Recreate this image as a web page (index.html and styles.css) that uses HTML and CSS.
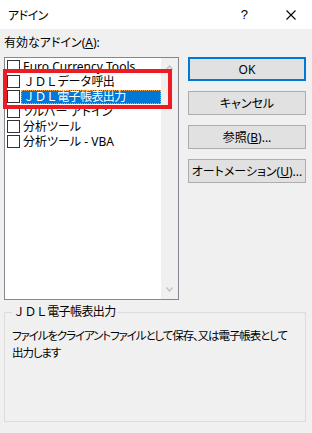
FILE: index.html
```
<!DOCTYPE html>
<html lang="ja">
<head>
    <meta charset="UTF-8">
    <title>アドイン</title>
    <link rel="stylesheet" href="styles.css">
</head>
<body>
    <div class="dialog">
        <div class="titlebar">
            <span class="title">アドイン</span>
            <span class="help">?</span>
            <svg class="close" width="10" height="10" viewBox="0 0 10 10">
                <path d="M0.5 0.5 L9.5 9.5 M9.5 0.5 L0.5 9.5" stroke="#000" stroke-width="1.1" fill="none"/>
            </svg>
        </div>
        <div class="content">
            <div class="label">有効なアドイン(<u>A</u>):</div>
            <div class="main">
                <div class="listbox">
                    <div class="items">
                        <div class="item"><span class="check"></span><span class="name">Euro Currency Tools</span></div>
                        <div class="item"><span class="check"></span><span class="name wide">ＪＤＬデータ呼出</span></div>
                        <div class="item"><span class="check"></span><span class="name wide selected">ＪＤＬ電子帳表出力</span></div>
                        <div class="item"><span class="check"></span><span class="name">ソルバー アドイン</span></div>
                        <div class="item"><span class="check"></span><span class="name">分析ツール</span></div>
                        <div class="item"><span class="check"></span><span class="name">分析ツール - VBA</span></div>
                    </div>
                    <div class="scrollbar">
                        <svg width="7" height="5" viewBox="0 0 7 5"><path d="M0.5 4.5 L3.5 1 L6.5 4.5" stroke="#c2c2c2" stroke-width="1.4" fill="none"/></svg>
                        <svg width="7" height="5" viewBox="0 0 7 5"><path d="M0.5 0.5 L3.5 4 L6.5 0.5" stroke="#c2c2c2" stroke-width="1.4" fill="none"/></svg>
                    </div>
                    <div class="marker"></div>
                </div>
                <div class="buttons">
                    <button class="btn default">OK</button>
                    <button class="btn">キャンセル</button>
                    <button class="btn">参照(<u>B</u>)...</button>
                    <button class="btn">オートメーション(<u>U</u>)...</button>
                </div>
            </div>
            <fieldset class="group">
                <legend>ＪＤＬ電子帳表出力</legend>
                <p class="desc">ファイルをクライアントファイルとして保存、又は電子帳表として<br>出力します</p>
            </fieldset>
        </div>
    </div>
</body>
</html>
```
FILE: styles.css
```
body{
    margin: 0;
    background-color: #f0f0f0;
    font-family: "Noto Sans", "Noto Sans CJK JP", sans-serif;
    font-size: 12px;
    color: #000;
}
.dialog{
    width: 312px;
    height: 433px;
    overflow: hidden;
}
.titlebar{
    height: 29px;
    background-color: #fff;
    display: flex;
    align-items: center;
}
.title{
    margin-left: 8px;
    font-feature-settings: "palt";
    letter-spacing: -0.5px;
}
.help{
    margin-left: auto;
    font-family: "Liberation Sans", sans-serif;
    font-size: 13px;
}
.close{
    margin-left: 38px;
    margin-right: 16px;
}
.content{
    padding: 0 6px 0 4px;
}
.label{
    padding-top: 6px;
    height: 16px;
    line-height: 16px;
    margin-bottom: 6px;
    font-feature-settings: "palt";
}
.main{
    display: flex;
}
.listbox{
    position: relative;
    box-sizing: border-box;
    width: 176px;
    height: 243px;
    border: 1px solid #828790;
    background-color: #fff;
    display: flex;
}
.items{
    flex: 1;
    padding: 1px 0 0 2px;
}
.item{
    height: 15px;
    display: flex;
    align-items: center;
}
.check{
    box-sizing: border-box;
    width: 13px;
    height: 13px;
    border: 1px solid #333;
    background-color: #fff;
    margin-right: 1px;
}
.name{
    padding: 0 2px;
    line-height: 14px;
    white-space: nowrap;
    font-feature-settings: "palt";
}
.wide{
    font-feature-settings: normal;
    letter-spacing: -0.6px;
}
.selected{
    background-color: #0078d7;
    color: #fff;
    outline: 1px dotted #f7a24a;
    outline-offset: -1px;
    width: 136px;
}
.scrollbar{
    width: 17px;
    background-color: #f0f0f0;
    display: flex;
    flex-direction: column;
    justify-content: space-between;
    align-items: center;
    padding: 7px 0 7px;
}
.marker{
    position: absolute;
    left: -2px;
    top: 11px;
    width: 161px;
    height: 32px;
    border: 4px solid #ed1c24;
}
.buttons{
    margin-left: 9px;
    display: flex;
    flex-direction: column;
    gap: 10px;
}
.btn{
    box-sizing: border-box;
    width: 118px;
    height: 24px;
    background-color: #e1e1e1;
    border: 1px solid #adadad;
    font-family: "Noto Sans", "Noto Sans CJK JP", sans-serif;
    font-size: 12px;
    font-feature-settings: "palt";
    color: #000;
    padding: 0;
}
.default{
    border: 2px solid #0078d7;
}
.group{
    margin: 4px 0 0 0;
    padding: 0 8px 0 7px;
    border: 1px solid #dcdcdc;
    height: 118px;
    box-sizing: border-box;
}
.group legend{
    padding: 0 1px;
    line-height: 16px;
    letter-spacing: -0.6px;
}
.desc{
    margin: 7px 0 0 0;
    line-height: 17px;
    font-size: 11.5px;
    letter-spacing: -1.1px;
    font-feature-settings: "palt";
    white-space: nowrap;
}
```
